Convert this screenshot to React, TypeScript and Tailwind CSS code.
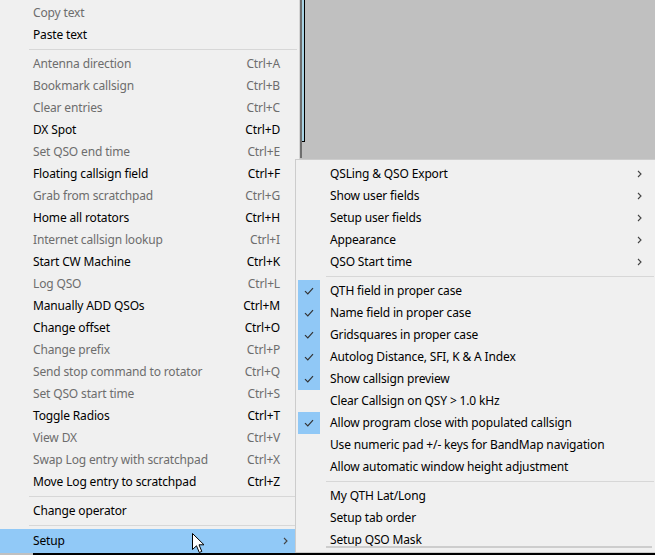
type Item = { label: string; key?: string; off?: boolean };

const leftTop: Item[] = [
  { label: "Copy text", off: true },
  { label: "Paste text" },
];

const leftMain: Item[] = [
  { label: "Antenna direction", key: "Ctrl+A", off: true },
  { label: "Bookmark callsign", key: "Ctrl+B", off: true },
  { label: "Clear entries", key: "Ctrl+C", off: true },
  { label: "DX Spot", key: "Ctrl+D" },
  { label: "Set QSO end time", key: "Ctrl+E", off: true },
  { label: "Floating callsign field", key: "Ctrl+F" },
  { label: "Grab from scratchpad", key: "Ctrl+G", off: true },
  { label: "Home all rotators", key: "Ctrl+H" },
  { label: "Internet callsign lookup", key: "Ctrl+I", off: true },
  { label: "Start CW Machine", key: "Ctrl+K" },
  { label: "Log QSO", key: "Ctrl+L", off: true },
  { label: "Manually ADD QSOs", key: "Ctrl+M" },
  { label: "Change offset", key: "Ctrl+O" },
  { label: "Change prefix", key: "Ctrl+P", off: true },
  { label: "Send stop command to rotator", key: "Ctrl+Q", off: true },
  { label: "Set QSO start time", key: "Ctrl+S", off: true },
  { label: "Toggle Radios", key: "Ctrl+T" },
  { label: "View DX", key: "Ctrl+V", off: true },
  { label: "Swap Log entry with scratchpad", key: "Ctrl+X", off: true },
  { label: "Move Log entry to scratchpad", key: "Ctrl+Z" },
];

const subMenus = ["QSLing & QSO Export", "Show user fields", "Setup user fields", "Appearance", "QSO Start time"];

const toggles: { label: string; on: boolean }[] = [
  { label: "QTH field in proper case", on: true },
  { label: "Name field in proper case", on: true },
  { label: "Gridsquares in proper case", on: true },
  { label: "Autolog Distance, SFI, K & A Index", on: true },
  { label: "Show callsign preview", on: true },
  { label: "Clear Callsign on QSY > 1.0 kHz", on: false },
  { label: "Allow program close with populated callsign", on: true },
  { label: "Use numeric pad +/- keys for BandMap navigation", on: false },
  { label: "Allow automatic window height adjustment", on: false },
];

const setupItems = ["My QTH Lat/Long", "Setup tab order", "Setup QSO Mask"];

function Chevron() {
  return (
    <svg width="5" height="8" viewBox="0 0 5 8" className="shrink-0">
      <path d="M1 1 L4 4 L1 7" fill="none" stroke="#444" strokeWidth="1.1" />
    </svg>
  );
}

function Check() {
  return (
    <svg width="10" height="8" viewBox="0 0 10 8">
      <path d="M1 4.2 L3.8 7 L9 1.2" fill="none" stroke="#333" strokeWidth="1.2" />
    </svg>
  );
}

function Row({ item }: { item: Item }) {
  return (
    <div className={`flex h-[22px] items-center pl-[33px] pr-[19px] ${item.off ? "text-[#6d6d6d]" : "text-black"}`}>
      <span className="flex-1">{item.label}</span>
      {item.key && <span>{item.key}</span>}
    </div>
  );
}

export default function App() {
  return (
    <div className="relative h-[555px] w-[655px] overflow-hidden bg-[#c0c0c0] font-['Noto_Sans',sans-serif] text-[12px] leading-none tracking-[-0.15px]">
      <div className="flex h-[552px]">
        {/* main context menu */}
        <div className="h-full w-[300px] border-r border-[#d4d4d4] bg-[#f0f0f0] pt-[2px]">
          {leftTop.map((it) => (
            <Row key={it.label} item={it} />
          ))}
          <div className="flex h-[7px] items-center pl-[29px] pr-[2px]">
            <div className="h-px w-full bg-[#d7d7d7]" />
          </div>
          {leftMain.map((it) => (
            <Row key={it.label} item={it} />
          ))}
          <div className="flex h-[7px] items-center pl-[29px] pr-[2px]">
            <div className="h-px w-full bg-[#d7d7d7]" />
          </div>
          <Row item={{ label: "Change operator" }} />
          <div className="flex h-[7px] items-center pl-[29px] pr-[2px]">
            <div className="h-px w-full bg-[#d7d7d7]" />
          </div>
          <div className="mr-[2px] flex h-[24px] items-center bg-[#91c9f7] pl-[33px] pr-[9px]">
            <span className="flex-1">Setup</span>
            <Chevron />
          </div>
        </div>

        {/* window behind */}
        <div className="flex h-[158px] flex-1">
          <div className="w-[2px] bg-[#6e6e6e]" />
          <div className="flex h-[142px] w-[3px] border-b border-r border-black bg-[#a9d3e3]" />
          <div className="flex-1 bg-[#c0c0c0]" />
        </div>
      </div>
      <div className="ml-[33px] h-[3px] bg-black" />

      {/* Setup submenu */}
      <div className="absolute left-[295px] top-[159px] h-[394px] w-[362px] border border-[#cccccc] bg-[#f0f0f0] pt-[3px]">
        {subMenus.map((s) => (
          <div key={s} className="flex h-[22px] items-center pl-[34px] pr-[14px]">
            <span className="flex-1">{s}</span>
            <Chevron />
          </div>
        ))}
        <div className="flex h-[7px] items-center pl-[30px] pr-[2px]">
          <div className="h-px w-full bg-[#d7d7d7]" />
        </div>
        {toggles.map((t) => (
          <div key={t.label} className="flex h-[22px] items-center">
            <div className={`ml-[2px] flex h-full w-[22px] items-center justify-center ${t.on ? "bg-[#90c8f6]" : ""}`}>
              {t.on && <Check />}
            </div>
            <span className="pl-[10px]">{t.label}</span>
          </div>
        ))}
        <div className="flex h-[7px] items-center pl-[30px] pr-[2px]">
          <div className="h-px w-full bg-[#d7d7d7]" />
        </div>
        {setupItems.map((s) => (
          <div key={s} className="flex h-[22px] items-center pl-[34px]">
            {s}
          </div>
        ))}
        <div className="absolute bottom-[4px] left-[30px] right-[4px] h-[2px] bg-[#cdcdcd]" />
      </div>

      {/* mouse pointer */}
      <svg className="absolute left-[192px] top-[533px]" width="14" height="22" viewBox="0 0 14 22">
        <path d="M0.5 0.5 L0.5 16.5 L4.5 12.8 L7.3 19.5 L9.8 18.4 L7 11.8 L12 11.8 Z" fill="#fff" stroke="#000" strokeWidth="1" />
      </svg>
    </div>
  );
}
